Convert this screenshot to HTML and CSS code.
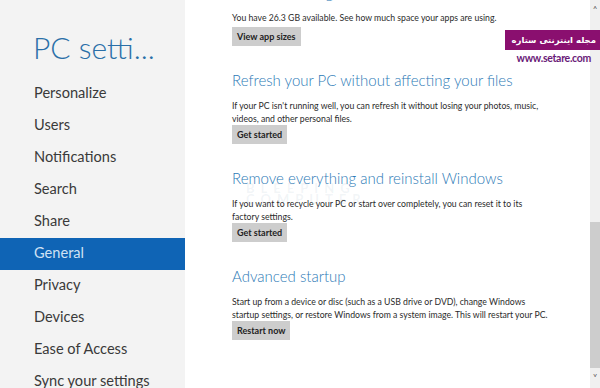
FILE: index.html
```html
<!DOCTYPE html>
<html lang="en">
<head>
  <meta charset="UTF-8" />
  <title>PC settings</title>
  <link rel="stylesheet" href="styles.css">
</head>
<body>
  <div class="screen">
    <aside class="sidebar">
      <h1 class="title">PC setti...</h1>
      <ul class="nav">
        <li>Personalize</li>
        <li>Users</li>
        <li>Notifications</li>
        <li>Search</li>
        <li>Share</li>
        <li class="active">General</li>
        <li>Privacy</li>
        <li>Devices</li>
        <li>Ease of Access</li>
        <li>Sync your settings</li>
      </ul>
    </aside>

    <main class="content">
      <section class="group first">
        <h2>Available storage</h2>
        <p>You have 26.3 GB available. See how much space your apps are using.</p>
        <button class="btn">View app sizes</button>
      </section>

      <section class="group">
        <h2>Refresh your PC without affecting your files</h2>
        <p>If your PC isn't running well, you can refresh it without losing your photos, music, videos, and other personal files.</p>
        <button class="btn">Get started</button>
      </section>

      <section class="group">
        <h2>Remove everything and reinstall Windows</h2>
        <p>If you want to recycle your PC or start over completely, you can reset it to its factory settings.</p>
        <button class="btn">Get started</button>
        <div class="bleeping">BLEEPING<br>COMPUTER</div>
      </section>

      <section class="group">
        <h2>Advanced startup</h2>
        <p>Start up from a device or disc (such as a USB drive or DVD), change Windows startup settings, or restore Windows from a system image. This will restart your PC.</p>
        <button class="btn">Restart now</button>
      </section>
    </main>

    <div class="scrollbar">
      <span class="arrow">&#708;</span>
      <div class="track"><div class="thumb"></div></div>
      <span class="arrow">&#709;</span>
    </div>

    <div class="stamp">
      <div class="stamp-name" dir="rtl">مجله اینترنتی ستاره</div>
      <div class="stamp-url">www.setare.com</div>
    </div>
  </div>
</body>
</html>
```

FILE: styles.css
```css
* {
  box-sizing: border-box;
  margin: 0;
  padding: 0;
}

body {
  font-family: Lato, 'Open Sans', sans-serif;
  background: #fff;
  width: 600px;
  height: 388px;
  overflow: hidden;
}

.screen {
  position: relative;
  display: flex;
  height: 388px;
}

.sidebar {
  width: 185px;
  flex-shrink: 0;
  background: #f3f3f3;
}

.title {
  font-weight: 300;
  font-size: 30px;
  line-height: 40px;
  color: #2a6fa8;
  padding: 27px 0 11px 33px;
  white-space: nowrap;
}

.nav {
  list-style: none;
}

.nav li {
  height: 32px;
  line-height: 30px;
  padding-left: 34px;
  font-size: 14.6px;
  color: #3a3a3a;
  white-space: nowrap;
}

.nav li.active {
  background: #0f64b5;
  color: #cfe2f4;
}

.content {
  flex: 1;
  padding-left: 47px;
  overflow: hidden;
}

.group {
  position: relative;
  margin-bottom: 23px;
}

.group.first {
  margin-top: -19px;
}

.group h2 {
  font-weight: 300;
  font-size: 15px;
  line-height: 22px;
  color: #2d7ab6;
  margin-bottom: 8px;
  white-space: nowrap;
}

.group p {
  font-size: 8.7px;
  line-height: 13px;
  color: #2b2b2b;
  width: 318px;
}

.group.first p {
  margin-bottom: 3px;
}

.btn {
  display: block;
  height: 19px;
  padding: 0 5px;
  border: none;
  background: #cdcdcd;
  font-family: inherit;
  font-weight: 700;
  font-size: 9px;
  color: #222;
}

.bleeping {
  position: absolute;
  left: 14px;
  top: 16px;
  font-size: 13px;
  line-height: 11px;
  letter-spacing: 6px;
  color: rgba(120, 150, 180, 0.1);
  font-weight: 700;
  pointer-events: none;
}

.stamp {
  position: absolute;
  right: 3px;
  top: 30px;
  display: flex;
  flex-direction: column;
  align-items: flex-end;
}

.stamp-name {
  background: #8a0f6f;
  color: #fff;
  font-family: 'DejaVu Sans', sans-serif;
  font-weight: 700;
  font-size: 8.5px;
  line-height: 20px;
  padding: 0 4px 0 7px;
  margin-right: -3px;
}

.stamp-url {
  font-size: 10.5px;
  line-height: 16px;
  font-weight: 700;
  letter-spacing: -0.3px;
  color: #6a1a78;
  padding-right: 6px;
}

.scrollbar {
  width: 10px;
  flex-shrink: 0;
  background: #f0f0f0;
  display: flex;
  flex-direction: column;
  align-items: center;
}

.arrow {
  font-size: 9px;
  line-height: 20px;
  height: 20px;
  color: #555;
}

.track {
  flex: 1;
  width: 100%;
  display: flex;
  flex-direction: column;
  justify-content: flex-end;
}

.thumb {
  height: 146px;
  background: #cdcdcd;
}
```
